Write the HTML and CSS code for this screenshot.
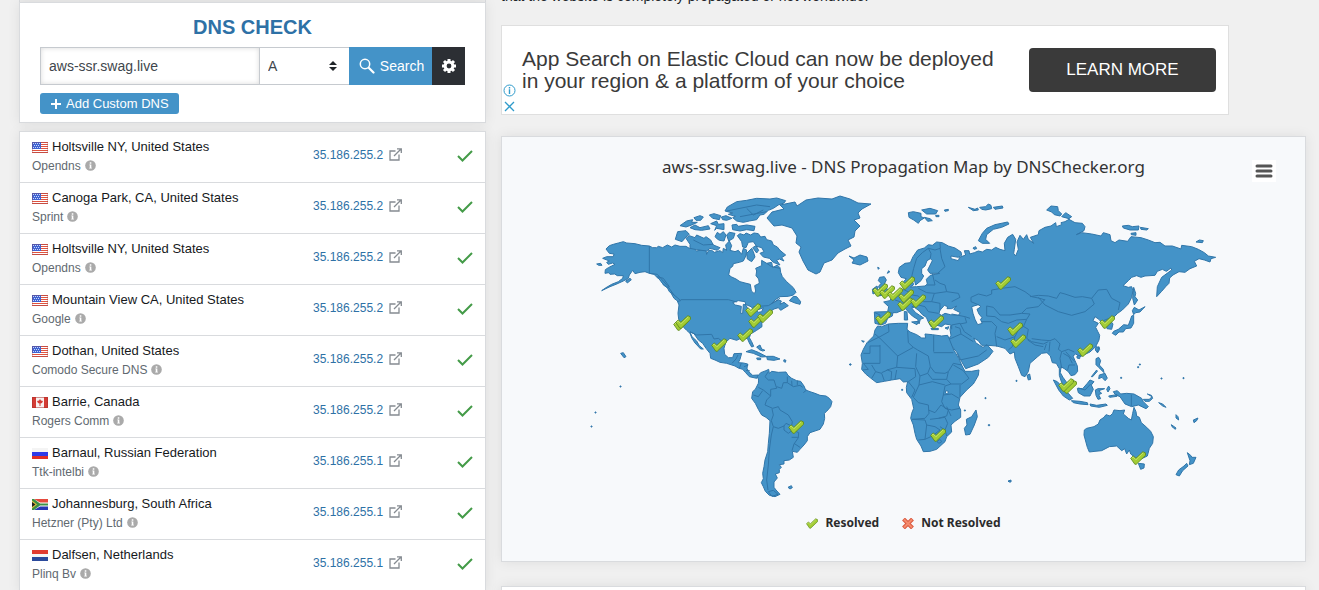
FILE: index.html
```html
<!DOCTYPE html>
<html lang="en">
<head>
<meta charset="utf-8">
<title>DNS Check</title>
<link rel="stylesheet" href="styles.css">
</head>
<body>
<svg class="sprites" aria-hidden="true">
  <symbol id="us" viewBox="0 0 16 11"><path fill="#fff" d="M0 0h16v11H0z"/><path stroke="#e0533f" d="M0 .5h16M0 2.5h16M0 4.5h16M0 6.5h16M0 8.5h16M0 10.5h16"/><path fill="#3f63d2" d="M0 0h9v7H0z"/><path stroke="#c9d5fb" stroke-dasharray="1 1" d="M1 1.500h7M2 3.500h6M1 5.500h7"/><path fill="none" stroke="#8b3a4a" stroke-opacity=".3" d="M.5.5h15v10H.5z"/></symbol>
  <symbol id="ca" viewBox="0 0 16 11"><path fill="#f7f1f0" d="M0 0h16v11H0z"/><path fill="#d43c35" d="M0 0h4v11H0zM12 0h4v11h-4zM8 2l1 1.500 2 .5-1 2-1.500.5V9h-1V6.500L6 6 5 4l2-.5z"/><path fill="none" stroke="#a82c28" stroke-opacity=".5" d="M.5.5h15v10H.5z"/></symbol>
  <symbol id="ru" viewBox="0 0 16 11"><path fill="#f4f4f4" d="M0 0h16v4H0z"/><path fill="#2c3bea" d="M0 4h16v4H0z"/><path fill="#dd2f28" d="M0 8h16v3H0z"/></symbol>
  <symbol id="za" viewBox="0 0 16 11"><path fill="#e5493c" d="M0 0h16v4H0z"/><path fill="#2637b4" d="M0 7h16v4H0z"/><path fill="#fff" d="M2 0l6 3.500h8v4H8L2 11z"/><path fill="#3f9147" d="M0 0h2l6 4.500h8v2H8L2 11H0z"/><path fill="#e6c43c" d="M0 1.500l5 4-5 4z"/><path fill="#222" d="M0 3l3.500 2.500L0 8z"/></symbol>
  <symbol id="nl" viewBox="0 0 16 11"><path fill="#e23c30" d="M0 0h16v4H0z"/><path fill="#f6f6f6" d="M0 4h16v3H0z"/><path fill="#2b4a9c" d="M0 7h16v4H0z"/></symbol>
  <symbol id="info" viewBox="0 0 12 12"><circle cx="6" cy="6" r="5.800" fill="#aaa"/><path fill="#fff" d="M5.200 2.500h1.700V4H5.200zM4.700 5h2.200v3.500h.6v.8H4.600v-.8h.6V5.800h-.5z"/></symbol>
  <symbol id="ext" viewBox="0 0 13 13"><path fill="none" stroke="#858b91" stroke-width="1.300" d="M6.500 3H1v9h9V6.500M5 8l7-7M8 .8h4.300V5"/></symbol>
  <symbol id="ok" viewBox="0 0 16 12"><path fill="none" stroke="#449b48" stroke-width="2" d="M1 6l4.500 4.500L15 1"/></symbol>
  <symbol id="pin" viewBox="0 0 46 40"><path fill="#a3cd35" stroke="#5d8a1e" stroke-width="2.500" stroke-linejoin="round" d="M2 21l7-7 8 7L37 2l7 3 1 7-27 26h-4z"/><path fill="none" stroke="#d3ec83" stroke-width="2" d="M5 20l4-3 8 8L38 5"/></symbol>
</svg>

<div class="page">
  <div class="side">
    <div class="strip"></div>
    <section class="card check">
      <h1>DNS CHECK</h1>
      <form class="search">
        <input class="host" type="text" aria-label="Domain name" value="aws-ssr.swag.live">
        <span class="kind">
          <select aria-label="Record type"><option>A</option></select>
          <svg class="caret" viewBox="0 0 8 10"><path fill="#212529" d="M4 0l4 4H0zM0 6h8l-4 4z"/></svg>
        </span>
        <button class="go" type="button"><svg width="16" height="16" viewBox="0 0 16 16"><g fill="none" stroke="#fff"><circle cx="6" cy="6" r="4.700" stroke-width="1.500"/><path stroke-width="2.200" stroke-linecap="round" d="M10 10l4.500 4.500"/></g></svg>Search</button>
        <button class="gear" type="button" aria-label="Settings"><svg width="16" height="16" viewBox="0 0 16 16"><g fill="none" stroke="#fff" stroke-width="3"><circle cx="8" cy="8" r="3.900"/><path d="M8 1v3M8 12v3M1 8h3M12 8h3M3 3l2 2M11 11l2 2M13 3l-2 2M5 11l-2 2"/></g></svg></button>
      </form>
      <button class="add" type="button"><svg width="12" height="12" viewBox="0 0 12 12"><path stroke="#fff" stroke-width="2" d="M6 1v10M1 6h10"/></svg>Add Custom DNS</button>
    </section>

    <table class="card results">
      <tbody>
        <tr><td><div class="place"><svg><use href="#us"/></svg>Holtsville NY, United States</div><div class="isp">Opendns<svg><use href="#info"/></svg></div></td><td class="ip"><a href="#">35.186.255.2</a><svg><use href="#ext"/></svg></td><td class="state"><svg><use href="#ok"/></svg></td></tr>
        <tr><td><div class="place"><svg><use href="#us"/></svg>Canoga Park, CA, United States</div><div class="isp">Sprint<svg><use href="#info"/></svg></div></td><td class="ip"><a href="#">35.186.255.2</a><svg><use href="#ext"/></svg></td><td class="state"><svg><use href="#ok"/></svg></td></tr>
        <tr><td><div class="place"><svg><use href="#us"/></svg>Holtsville NY, United States</div><div class="isp">Opendns<svg><use href="#info"/></svg></div></td><td class="ip"><a href="#">35.186.255.2</a><svg><use href="#ext"/></svg></td><td class="state"><svg><use href="#ok"/></svg></td></tr>
        <tr><td><div class="place"><svg><use href="#us"/></svg>Mountain View CA, United States</div><div class="isp">Google<svg><use href="#info"/></svg></div></td><td class="ip"><a href="#">35.186.255.2</a><svg><use href="#ext"/></svg></td><td class="state"><svg><use href="#ok"/></svg></td></tr>
        <tr><td><div class="place"><svg><use href="#us"/></svg>Dothan, United States</div><div class="isp">Comodo Secure DNS<svg><use href="#info"/></svg></div></td><td class="ip"><a href="#">35.186.255.2</a><svg><use href="#ext"/></svg></td><td class="state"><svg><use href="#ok"/></svg></td></tr>
        <tr><td><div class="place"><svg><use href="#ca"/></svg>Barrie, Canada</div><div class="isp">Rogers Comm<svg><use href="#info"/></svg></div></td><td class="ip"><a href="#">35.186.255.2</a><svg><use href="#ext"/></svg></td><td class="state"><svg><use href="#ok"/></svg></td></tr>
        <tr><td><div class="place"><svg><use href="#ru"/></svg>Barnaul, Russian Federation</div><div class="isp">Ttk-intelbi<svg><use href="#info"/></svg></div></td><td class="ip"><a href="#">35.186.255.1</a><svg><use href="#ext"/></svg></td><td class="state"><svg><use href="#ok"/></svg></td></tr>
        <tr><td><div class="place"><svg><use href="#za"/></svg>Johannesburg, South Africa</div><div class="isp">Hetzner (Pty) Ltd<svg><use href="#info"/></svg></div></td><td class="ip"><a href="#">35.186.255.1</a><svg><use href="#ext"/></svg></td><td class="state"><svg><use href="#ok"/></svg></td></tr>
        <tr><td><div class="place"><svg><use href="#nl"/></svg>Dalfsen, Netherlands</div><div class="isp">Plinq Bv<svg><use href="#info"/></svg></div></td><td class="ip"><a href="#">35.186.255.1</a><svg><use href="#ext"/></svg></td><td class="state"><svg><use href="#ok"/></svg></td></tr>
      </tbody>
    </table>
  </div>

  <main class="main">
    <p class="intro">that the website is completely propagated or not worldwide.</p>
    <aside class="ad">
      <div class="choices">
        <svg width="13" height="13" viewBox="0 0 13 13"><circle cx="6.500" cy="6.500" r="5.500" fill="none" stroke="#2f9bcb"/><path fill="#2f9bcb" d="M5.800 3h1.400v1.400H5.800zM5.800 5.300h1.400V10H5.800z"/></svg>
        <svg width="13" height="13" viewBox="0 0 13 13"><path stroke="#2f9bcb" stroke-width="1.300" d="M2 2l9 9M11 2l-9 9"/></svg>
      </div>
      <p>App Search on Elastic Cloud can now be deployed<br>in your region &amp; a platform of your choice</p>
      <button class="learn" type="button">LEARN MORE</button>
    </aside>

    <section class="card chart">
      <header>
        <h2>aws-ssr.swag.live - DNS Propagation Map by DNSChecker.org</h2>
        <button class="menu" type="button" aria-label="Chart menu"><svg width="18" height="14" viewBox="0 0 18 14"><path stroke="#555" stroke-width="3" stroke-linecap="round" d="M2 2h14M2 7h14M2 12h14"/></svg></button>
      </header>
      <svg class="map" viewBox="584 190 640 314" role="img" aria-label="World map of resolvers">
        <!-- North America -->
        <g transform="translate(580 185) scale(.33333)">
          <path class="land" d="M78 192L88 182 100 178 115 174 130 170 140 174 165 176 185 181 208 183 218 188 230 188 235 184 248 188 262 180 275 186 285 180 300 184 318 184 328 190 340 189 350 198 365 195 378 197 380 208 386 196 395 196 403 202 420 197 428 203 430 190 440 196 437 180 448 168 455 182 450 196 465 200 475 196 485 208 490 190 500 195 498 212 490 228 478 232 460 236 458 244 450 250 446 270 455 276 468 282 480 290 495 294 511 298 514 318 523 326 527 318 524 302 538 295 536 282 528 272 530 258 527 250 545 242 545 226 560 235 575 232 578 248 592 240 600 248 602 262 607 275 620 290 640 308 648 322 640 330 625 334 600 335 585 345 575 356 595 345 604 348 600 358 612 352 625 362 602 376 595 368 582 372 570 380 560 390 545 405 546 425 530 436 512 447 508 458 515 470 521 484 515 486 508 474 502 460 485 464 478 462 470 466 450 460 437 472 432 490 434 508 445 518 458 518 462 506 485 505 480 523 475 533 490 534 503 537 501 550 506 560 518 571 535 570 530 580 508 575 496 562 488 553 475 549 465 543 440 535 420 532 405 525 392 520 390 505 378 490 368 475 355 465 342 446 330 441 336 455 350 468 358 482 370 492 362 492 345 474 336 460 330 445 320 436 312 428 302 415 296 402 294 385 297 360 292 348 300 346 288 340 280 328 268 320 262 308 250 300 245 288 232 278 222 268 208 265 195 260 180 262 165 266 158 256 148 270 145 280 130 288 108 298 90 305 65 317 78 308 95 298 115 290 128 280 130 272 112 272 104 267 90 268 86 263 75 265 76 254 85 248 105 238 98 234 85 238 80 232 88 228 68 220 80 215 100 215 102 207 88 205z"/>
          <path class="land" d="M435 78L442 66 470 50 500 46 530 40 570 42 590 39 617 47 612 54 595 60 580 70 565 76 552 88 540 90 530 104 508 108 490 112 470 108 458 98 466 94 445 88 458 84zM456 120L470 118 475 124 500 120 525 124 522 137 500 134 480 138 458 134zM318 160L328 152 345 158 350 150 372 160 378 155 392 165 400 180 420 188 412 196 390 190 380 198 350 194 330 190 330 178zM286 163L293 140 318 137 328 148 318 156 306 170zM300 122L320 108 338 104 335 112 352 112 335 120 318 126zM342 98L360 92 370 96 362 106 348 106zM330 128L345 120 360 128 385 122 390 132 365 136 345 134zM388 90L402 86 422 92 418 104 398 100zM392 116L410 108 415 118 432 116 432 134 410 130 404 136 410 122zM424 96L438 92 456 100 440 106 428 104zM405 155L412 142 420 148 430 140 438 150 432 168 418 166 412 162zM440 150L448 142 465 145 460 160 446 168zM472 152L480 146 492 150 498 144 512 150 522 144 535 146 542 156 555 154 560 164 575 168 580 180 592 186 600 196 617 210 605 218 612 228 598 222 590 226 600 240 580 232 568 220 550 216 540 205 552 200 545 188 530 184 520 170 505 172 498 188 488 186 485 170zM500 205L515 190 520 200 525 216 515 230 502 222zM518 188L528 182 536 196 530 204z"/>
          <path class="land" d="M50 237L62 235 66 241 56 241zM137 288L150 280 154 284 142 294zM122 505L130 503 138 515 132 518zM232 275L250 280 268 305 262 308 248 296zM272 322L292 338 302 347 294 349 282 340zM628 347L640 334 650 335 662 350 660 358 645 354zM498 500L515 494 535 502 560 515 545 516 520 505zM560 514L580 514 600 522 582 526 562 524zM530 486L540 480 545 492 555 496 548 498 538 494zM530 519h12v5h-10zM612 524l6 2-2 6-5-3z"/>
          <path class="hole" d="M458 353L475 347 495 350 498 360 490 358 488 385 482 385 484 364 466 360zM496 358L515 366 520 378 508 378zM530 376L550 368 545 380 535 382z"/>
          <path class="border" d="M208 183V265M208 265L232 268 262 302 282 330M302 344H445L470 351M520 365L565 362 600 340M330 440L350 450 395 448 402 462 415 460 438 478M456 535L468 522 474 510M484 534L478 550M498 556L510 558M492 545L505 540M600 250L575 245 560 235M440 78L530 60 570 65M480 95L560 80M500 70L520 90 550 75M340 165L370 180 400 178"/>
        </g>
        <!-- Greenland and Iceland -->
        <g>
          <path class="land" d="M767 218L772 212 784 209 780 205 795 202 797 206 806 200 818 198 832 199 840 196 850 199 858 203 871 204 862 209 858 213 860 218 854 220 860 226 855 231 854 237 848 240 851 246 845 249 838 253 832 260 824 263 820 272 816 274 808 270 803 261 799 252 801 247 796 243 797 236 792 228 782 225 774 226z"/>
          <path class="land" d="M849 256L854 258 860 255 867 257 868 261 860 265 852 263 854 260z"/>
        </g>
        <!-- South America -->
        <g transform="translate(700 350) scale(.33333)">
          <path class="land" d="M172 80L182 68 198 62 206 58 208 70 215 64 235 67 258 66 264 76 275 85 290 92 302 94 312 108 317 120 330 125 345 130 360 136 378 138 388 145 396 155 392 170 380 184 373 190 374 205 370 222 360 238 345 243 330 248 322 260 322 272 312 285 300 298 292 307 277 304 280 322 268 330 252 332 252 342 238 344 244 352 238 358 238 368 226 372 232 384 222 396 222 412 228 420 240 433 225 440 208 436 196 424 190 410 184 398 190 386 188 370 192 350 195 330 203 305 205 280 208 250 210 212 198 202 185 195 175 178 166 160 155 145 158 125 166 118 175 100 176 90zM264 412l10-5 3 6-7 4zM205 425l15-4 14 12-18 6z"/>
          <path class="border" d="M205 65L195 80 205 90 222 90 230 115 212 118 212 138M175 112L190 120 212 138 200 150 195 165 218 175 235 170 240 180 265 195 277 215 275 228M160 135L175 140 188 122M230 110L245 115 250 98 262 98 262 80M262 98L280 110 300 106 308 112M275 92L276 108M292 92V105M216 176L220 195 214 212 220 230 235 235 252 228 258 220 275 228M220 230L214 255 208 300 205 345 200 390 204 420M275 262L295 262 296 248 278 240 265 250 252 240 252 228M296 262L282 282 276 302M282 280L300 292M310 128L320 120"/>
        </g>
        <!-- Eurasia -->
        <g transform="translate(845 190) scale(.33333)">
          <path class="land" d="M163 232L180 220 196 218 204 200 218 180 238 174 250 164 262 166 275 156 292 158 310 168 330 174 348 186 350 196 340 202 318 198 318 206 340 212 344 202 362 195 358 182 372 182 374 192 388 188 400 183 412 186 425 178 440 180 452 172 465 178 480 182 478 160 488 142 503 133 512 148 508 178 506 190 512 198 520 178 516 156 525 136 535 148 545 134 550 148 566 160 556 142 580 134 582 122 600 112 618 108 632 98 634 110 650 104 648 98 660 95 672 88 690 98 712 100 720 110 717 122 694 134 710 128 740 132 768 138 775 128 795 134 798 152 810 158 822 150 848 154 858 140 888 143 910 150 930 158 945 157 960 168 982 168 1008 177 1010 166 1040 170 1060 178 1078 188 1090 198 1112 202 1098 206 1095 216 1078 210 1062 206 1048 214 1055 228 1035 236 1020 247 1002 245 984 255 974 264 972 280 962 290 950 304 935 320 937 290 950 262 980 240 978 234 964 244 952 238 937 244 930 256 900 258 888 262 875 257 860 262 850 272 834 287 850 292 860 290 864 302 860 322 850 342 832 360 818 370 808 380 796 392 804 402 800 418 786 416 783 400 770 398 762 388 750 380 744 392 760 400 752 412 758 424 764 436 762 450 752 470 735 486 718 494 705 500 692 492 684 498 690 512 697 528 698 544 690 554 678 557 670 545 658 536 648 530 646 548 654 562 664 576 666 592 655 588 648 572 643 556 643 536 634 520 622 518 616 498 606 488 590 490 578 500 555 520 550 545 540 560 530 556 520 530 510 505 508 486 495 492 480 475 455 468 428 466 410 466 400 452 386 444 392 458 404 466 414 472 426 464 444 484 430 502 400 522 362 536 350 515 338 490 320 468 310 450 318 436 315 418 318 405 300 402 290 410 270 404 258 410 250 396 244 382 232 374 222 362 208 352 200 354 212 368 224 376 236 384 226 388 222 402 218 388 202 378 190 366 182 356 170 362 155 368 144 368 142 378 128 385 122 400 108 405 90 400 88 366 128 365 131 350 116 336 134 332 146 316 165 304 178 298 176 275 184 266 168 262 160 248z"/>
          <path class="hole" d="M198 262L206 284 196 291 215 290 240 288 247 282 244 268 256 256 284 250 255 250 248 240 262 212 256 206 246 212 240 228 230 236 230 250 236 258 228 272 212 285 206 262zM284 362L298 346 308 350 306 356 320 356 335 348 326 358 346 368 340 376 316 374 300 370 290 376 282 372zM380 350L400 344 408 350 396 358 402 372 412 384 406 388 412 400 398 404 390 388 384 370z"/>
          <path class="land" d="M100 290L108 280 100 272 104 262 118 260 124 270 118 282 128 300 132 312 100 318 112 306zM82 298L96 288 100 304 84 312zM178 364L186 366 188 390 178 390zM200 396L220 394 216 404zM258 415h22v4h-20zM300 414l12-4-4 8zM98 232l5 2-3 4zM127 250l4-8 3 4z"/>
          <path class="land" d="M190 68L205 65 228 70 228 80 238 84 225 92 220 100 206 90 192 82zM230 60L255 55 278 62 272 72 245 72zM238 82L255 86 262 92 248 94zM272 76h10v4h-9zM298 60l12-2v4l-10 2zM370 52L390 58 398 54 400 60 385 62zM404 52L422 50 430 42 438 46 440 56 422 60 410 58zM445 52L472 48 474 54 450 58zM400 152L412 130 425 115 450 104 488 96 492 102 470 112 445 118 425 134 422 148 434 160 412 160zM384 174l8-4 3 6-8 2zM605 60L618 48 638 50 640 62 650 72 645 78 628 74 620 66zM650 80L662 68 680 80 672 86zM832 108L850 106 862 110 882 108 880 120 855 120 835 114zM886 112L910 116 905 120 888 118zM858 130l15-2v8l-14-2zM1053 156l10-6 12 2-3 6z"/>
          <path class="land" d="M866 292L872 310 870 320 878 330 868 345 863 325zM862 362L868 352 882 360 900 350 885 366 872 368 866 374zM806 424L820 418 836 404 850 406 856 390 860 378 866 376 866 400 858 414 842 416 835 426 822 426 812 436 802 430zM752 478l10-8 2 8-6 10zM696 498l10-2-2 10-8-2zM546 556L554 552 557 568 550 570z"/>
          <path class="border" d="M285 160L286 175 270 180 250 175 232 188 215 205 206 235 200 260M250 175L258 190 256 205M285 175L290 205 300 230 278 250M245 285L270 285 262 250M270 270L285 280 300 285 305 305 270 310 245 308M245 308L220 295M268 310L260 335 235 335 220 318 200 315M205 312L178 300M150 330L165 335 170 350M200 350L220 345 240 350 250 365 280 370M260 335L285 340 285 362M305 305L340 310 345 322 320 335M320 372L360 380 375 385M345 400L320 405 320 418M345 400L358 425 380 440M360 382L365 398 345 402M90 368L105 375 100 402M130 366L142 370M378 335L378 322 400 312 425 318 440 312 440 300 470 295 510 290 540 305 560 320 585 325 600 330M378 335L402 345M425 348L445 352 465 375 495 375 530 370 545 355 580 350 600 328M425 348V378L450 380 470 395 490 400M408 395L440 395 455 410 450 430 455 470M490 400L515 390 545 388 535 410 520 420 510 440 480 450 455 440M545 388L555 372 530 370M520 400L550 418 545 445 560 455 595 462 610 455M490 480L502 470 510 440M548 450L570 465 595 470M555 320L580 316 610 318 635 325 645 308 660 312 690 322 712 320 740 325 760 300 785 298 800 325 825 338 820 360M580 322L600 345 640 365 680 376 720 365 748 342 740 325M560 446L590 450 615 452 630 446 645 462 640 478 650 485 670 478 688 486M604 462L598 480M615 455L612 485M650 485L645 505 650 535M655 490L672 500 682 520M662 485L680 505 690 515M668 540L672 525 690 525M336 488L345 510 400 498 425 480M312 448L330 440 348 432 345 415 330 410M348 432L385 455M795 384L775 392M780 402L798 400"/>
        </g>
        <!-- Africa -->
        <g transform="translate(845 310) scale(.33333)">
          <path class="land" d="M90 60L98 48 110 50 130 42 160 40 188 40 186 58 195 66 215 74 230 84 242 84 240 72 262 74 290 78 308 76 314 90 326 120 342 146 350 165 360 184 380 184 402 180 400 196 385 222 365 240 345 262 340 285 347 300 347 322 330 334 318 345 320 366 305 380 300 395 275 418 255 424 235 425 228 408 215 388 210 370 205 345 197 325 200 310 206 295 200 268 185 248 184 232 188 215 175 216 165 206 140 210 118 214 95 218 78 205 62 192 50 178 52 160 48 135 55 118 66 98 86 78z"/>
          <path class="land" d="M393 300L397 320 388 345 375 373 362 375 358 355 366 345 364 328 380 320zM50 92l8 2-4 3zM14 162h3v3h-3zM170 238h3v3h-3zM358 300h3v3h-3zM420 263h3v3h-3zM430 344h4v3h-4zM513 211h3v3h-3z"/>
          <path class="hole" d="M302 242L310 244 308 252 301 250z"/>
          <path class="border" d="M130 42L132 65 105 80 68 98M90 72L104 84 158 138 205 112 190 98 188 62M105 105V160L55 160M55 130H75V108H105M266 76V125M266 128H325M205 112L218 120 250 138 256 170 248 190 225 198 212 170 215 130M158 138L155 172 210 176 212 200 190 215M125 180L155 172M256 170L270 188 300 190 310 185 305 208 262 208 248 190M310 185L325 160 350 165M325 165L355 182 372 205 350 222 318 222 305 208M345 225L345 262M318 222L300 228 295 255 320 252 342 265M295 255L290 275 300 295 320 300 345 295M225 198L222 225 205 262M222 225L262 215 300 225M205 262L220 278 250 285 252 310 240 325 200 328M250 300L270 308 288 285 310 300 305 318 280 325 255 328M200 328L240 330 245 345 240 388 220 390M245 345L270 350 285 360 262 378 240 388M280 325L300 322 308 340 300 360 285 350M300 360L305 378M276 395L285 388 290 395 282 400zM80 205L92 185 110 190 118 212M92 185L80 165M110 188L128 180 140 185 138 210M55 160L70 178 52 180M155 180L150 208M190 215L210 240 200 262M305 290L318 318"/>
        </g>
        <!-- South-east Asia and Oceania -->
        <g transform="translate(1030 330) scale(.33333)">
          <path class="land" d="M163 300L170 295 192 290 205 282 210 270 222 262 228 254 240 258 248 250 252 240 270 242 284 240 280 252 295 265 304 270 308 250 312 232 318 245 320 258 328 262 334 278 350 292 362 304 370 320 368 340 358 355 352 378 335 386 318 384 302 372 298 360 290 372 284 356 275 362 260 348 238 350 215 362 195 364 178 366 172 352 166 330 162 315zM325 400L343 402 342 414 332 418z"/>
          <path class="land" d="M472 368L482 376 486 382 498 382 490 400 478 404 480 392zM470 400L474 408 458 422 448 438 438 434 446 420 462 408zM70 150L82 155 98 172 115 190 128 205 118 210 100 198 86 180zM124 212L150 214 172 218 174 224 150 222 130 218zM180 222L200 226 228 222 232 226 208 232 182 228zM142 175L158 176 172 160 180 150 192 155 184 165 190 178 180 198 162 198 145 188zM196 180L204 176 224 176 206 182 215 190 206 194 212 206 204 208 198 196zM230 178l6-10 4 8-6 10zM236 198l25-4v5l-22 3zM250 185L262 182 272 192 290 190 312 192 335 205 340 215 355 230 348 236 325 225 305 230 285 222 270 200 256 194zM340 208L358 208 366 200 352 192 364 196 368 205 358 214 345 214zM386 218L398 222 408 232 398 228zM438 254l6 6 2 10-8-6zM424 284l14 10-2 4-10-8zM490 270l14-6-4 8-8 6zM198 86L206 82 212 92 208 105 220 118 222 128 206 112 198 104zM208 135L225 130 232 145 225 152 216 142 206 146zM184 140L200 120 202 124 188 140zM198 50l8 2-4 16-6-8zM272 142h3v3h-3zM323 110h3v3h-3zM328 102h3v3h-3zM393 144h3v3h-3zM459 143h3v3h-3z"/>
          <path class="border" d="M304 194V228M145 174L165 180 182 162"/>
        </g>
        <path class="land" d="M620 386h1v1h-1zM595 412h1v1h-1zM591 426h1v1h-1zM850 364h1v1h-1zM1008 481l3-1v2h-2z"/>
        <g class="pins">
          <use href="#pin" x="673" y="317" width="16" height="14"/><use href="#pin" x="675" y="315" width="16" height="14"/>
          <use href="#pin" x="745" y="303" width="16" height="14"/><use href="#pin" x="748" y="314" width="16" height="14"/><use href="#pin" x="757" y="309" width="16" height="14"/>
          <use href="#pin" x="737" y="328" width="16" height="14"/><use href="#pin" x="711" y="338" width="16" height="14"/><use href="#pin" x="788" y="420" width="16" height="14"/>
          <use href="#pin" x="872" y="283" width="16" height="14"/><use href="#pin" x="879" y="285" width="16" height="14"/><use href="#pin" x="887" y="287" width="16" height="14"/>
          <use href="#pin" x="899" y="276" width="16" height="14"/><use href="#pin" x="897" y="297" width="16" height="14"/><use href="#pin" x="898" y="289" width="16" height="14"/>
          <use href="#pin" x="910" y="294" width="16" height="14"/><use href="#pin" x="875" y="311" width="16" height="14"/><use href="#pin" x="928" y="315" width="16" height="14"/>
          <use href="#pin" x="995" y="276" width="16" height="14"/><use href="#pin" x="1010" y="334" width="16" height="14"/><use href="#pin" x="1007" y="322" width="16" height="14"/>
          <use href="#pin" x="930" y="428" width="16" height="14"/><use href="#pin" x="1099" y="315" width="16" height="14"/><use href="#pin" x="1077" y="343" width="16" height="14"/>
          <use href="#pin" x="1061" y="380" width="16" height="14"/><use href="#pin" x="1058" y="378" width="16" height="14"/><use href="#pin" x="1130" y="451" width="16" height="14"/>
        </g>
      </svg>
      <div class="legend">
        <span><svg width="12" height="11"><use href="#pin"/></svg>Resolved</span>
        <span><svg width="12" height="11" viewBox="0 0 12 11"><path stroke="#d9583f" stroke-width="4" d="M1.500 1l9 9M10.500 1l-9 9"/><path stroke="#f58b6c" stroke-width="2" d="M2 1.500l8 8M10 1.500l-8 8"/></svg>Not Resolved</span>
      </div>
    </section>
    <section class="card next"></section>
  </main>
</div>
</body>
</html>
```
FILE: styles.css
```css
* { box-sizing: border-box; }
html, body { height: 100%; }
body {
  margin: 0;
  overflow: hidden;
  background: #f0f0f0;
  color: #212529;
  font-family: "Liberation Sans", Arial, sans-serif;
  font-size: 13px;
}
h1, h2, p { margin: 0; }
button { border: 0; padding: 0; color: #fff; font-family: inherit; }
.sprites { display: none; }

.page { display: flex; align-items: flex-start; gap: 15px; padding: 0 13px 0 19px; }
.side { flex: 0 0 467px; }
.main { flex: 1; min-width: 0; }
.card { background: #fff; border: 1px solid #d9dbde; box-shadow: 0 0 12px rgba(0, 0, 0, .08); }
.strip { height: 2px; background: #ebebeb; border: solid #d9dbde; border-width: 0 1px; }

.check { padding: 12px 20px 8px; }
.check h1 { color: #2e71a6; font-size: 20px; line-height: 24px; text-align: center; }
.search { display: flex; height: 38px; margin: 8px 0; }
.host {
  flex: 1;
  min-width: 0;
  padding: 0 8px;
  border: 1px solid #c6cacf;
  box-shadow: inset 0 0 5px rgba(0, 0, 0, .15);
  color: #40464c;
  font: 14px "Liberation Sans", Arial, sans-serif;
}
.kind { position: relative; flex: 0 0 89px; }
.kind select {
  width: 100%;
  height: 100%;
  padding: 0 8px;
  appearance: none;
  background: #fff;
  border: solid #c6cacf;
  border-width: 1px 0;
  border-radius: 0;
  color: #40464c;
  font: 14px "Liberation Sans", Arial, sans-serif;
}
.caret { position: absolute; top: 14px; right: 12px; width: 8px; height: 10px; pointer-events: none; }
.go { display: flex; flex: 0 0 83px; align-items: center; justify-content: center; gap: 5px; padding-left: 2px; background: #4493c8; font-size: 14px; }
.gear { display: grid; flex: 0 0 33px; place-items: center; background: #2c2f34; }
.add { display: flex; align-items: center; height: 21px; padding: 0 10px; gap: 4px; border-radius: 3px; background: #4493c8; font-size: 13px; }

.results { width: 100%; margin-top: 8px; border-collapse: separate; border-spacing: 0; }
.results td { height: 51px; padding: 5px 0 7px; border-bottom: 1px solid #d9dbde; }
.results td:first-child { padding-left: 12px; }
.place { display: flex; align-items: center; gap: 4px; color: #16191c; line-height: 20px; }
.place svg { width: 16px; height: 11px; }
.isp { display: flex; align-items: center; gap: 4px; color: #616970; font-size: 12px; line-height: 18px; }
.isp svg { width: 11px; height: 11px; margin-bottom: 2px; }
.results .ip { width: 144px; padding: 2px 0 7px; }
.ip a { color: #2e71a6; font-size: 12px; text-decoration: none; vertical-align: middle; }
.ip svg { width: 13px; height: 13px; margin: 0 0 2px 6px; vertical-align: middle; }
.results .state { width: 28px; }
.state svg { display: block; width: 16px; height: 12px; }

.intro { margin-top: -13px; font-size: 14px; line-height: 18px; }
.ad { display: flex; align-items: center; width: 728px; height: 90px; margin-top: 20px; padding-right: 12px; background: #fff; border: 1px solid #dfdfdf; }
.choices { display: flex; flex-direction: column; align-self: flex-end; gap: 3px; padding: 0 6px 1px 1px; }
.ad p { flex: 1; color: #3a3a3a; font-size: 21px; line-height: 22px; }
.learn { width: 187px; height: 44px; border-radius: 4px; background: #3a3a3a; font-size: 17px; }

.chart { display: flex; flex-direction: column; align-items: center; margin-top: 21px; padding: 17px 0 30px; background: #f7f9fb; }
.chart header { position: relative; width: 100%; }
.chart h2 { color: #333; font-family: "Noto Sans", sans-serif; font-size: 17px; font-weight: 400; line-height: 26px; text-align: center; }
.menu { position: absolute; top: 6px; right: 29px; display: grid; width: 24px; height: 22px; place-items: center; background: #fff; }
.map { width: 640px; max-width: 100%; margin-top: 10px; }
.land { fill: #4493c8; stroke: #3075a9; }
.border { fill: none; stroke: #3075a9; }
.hole { fill: #f7f9fb; stroke: #3075a9; }
g[transform] > path { stroke-width: 3px; stroke-linejoin: round; }
.legend { display: flex; gap: 23px; margin-top: 11px; color: #2b2b2b; font: bold 12px/16px "Noto Sans", sans-serif; }
.legend span { display: flex; align-items: center; gap: 7px; }
.next { height: 60px; margin-top: 24px; }
```
